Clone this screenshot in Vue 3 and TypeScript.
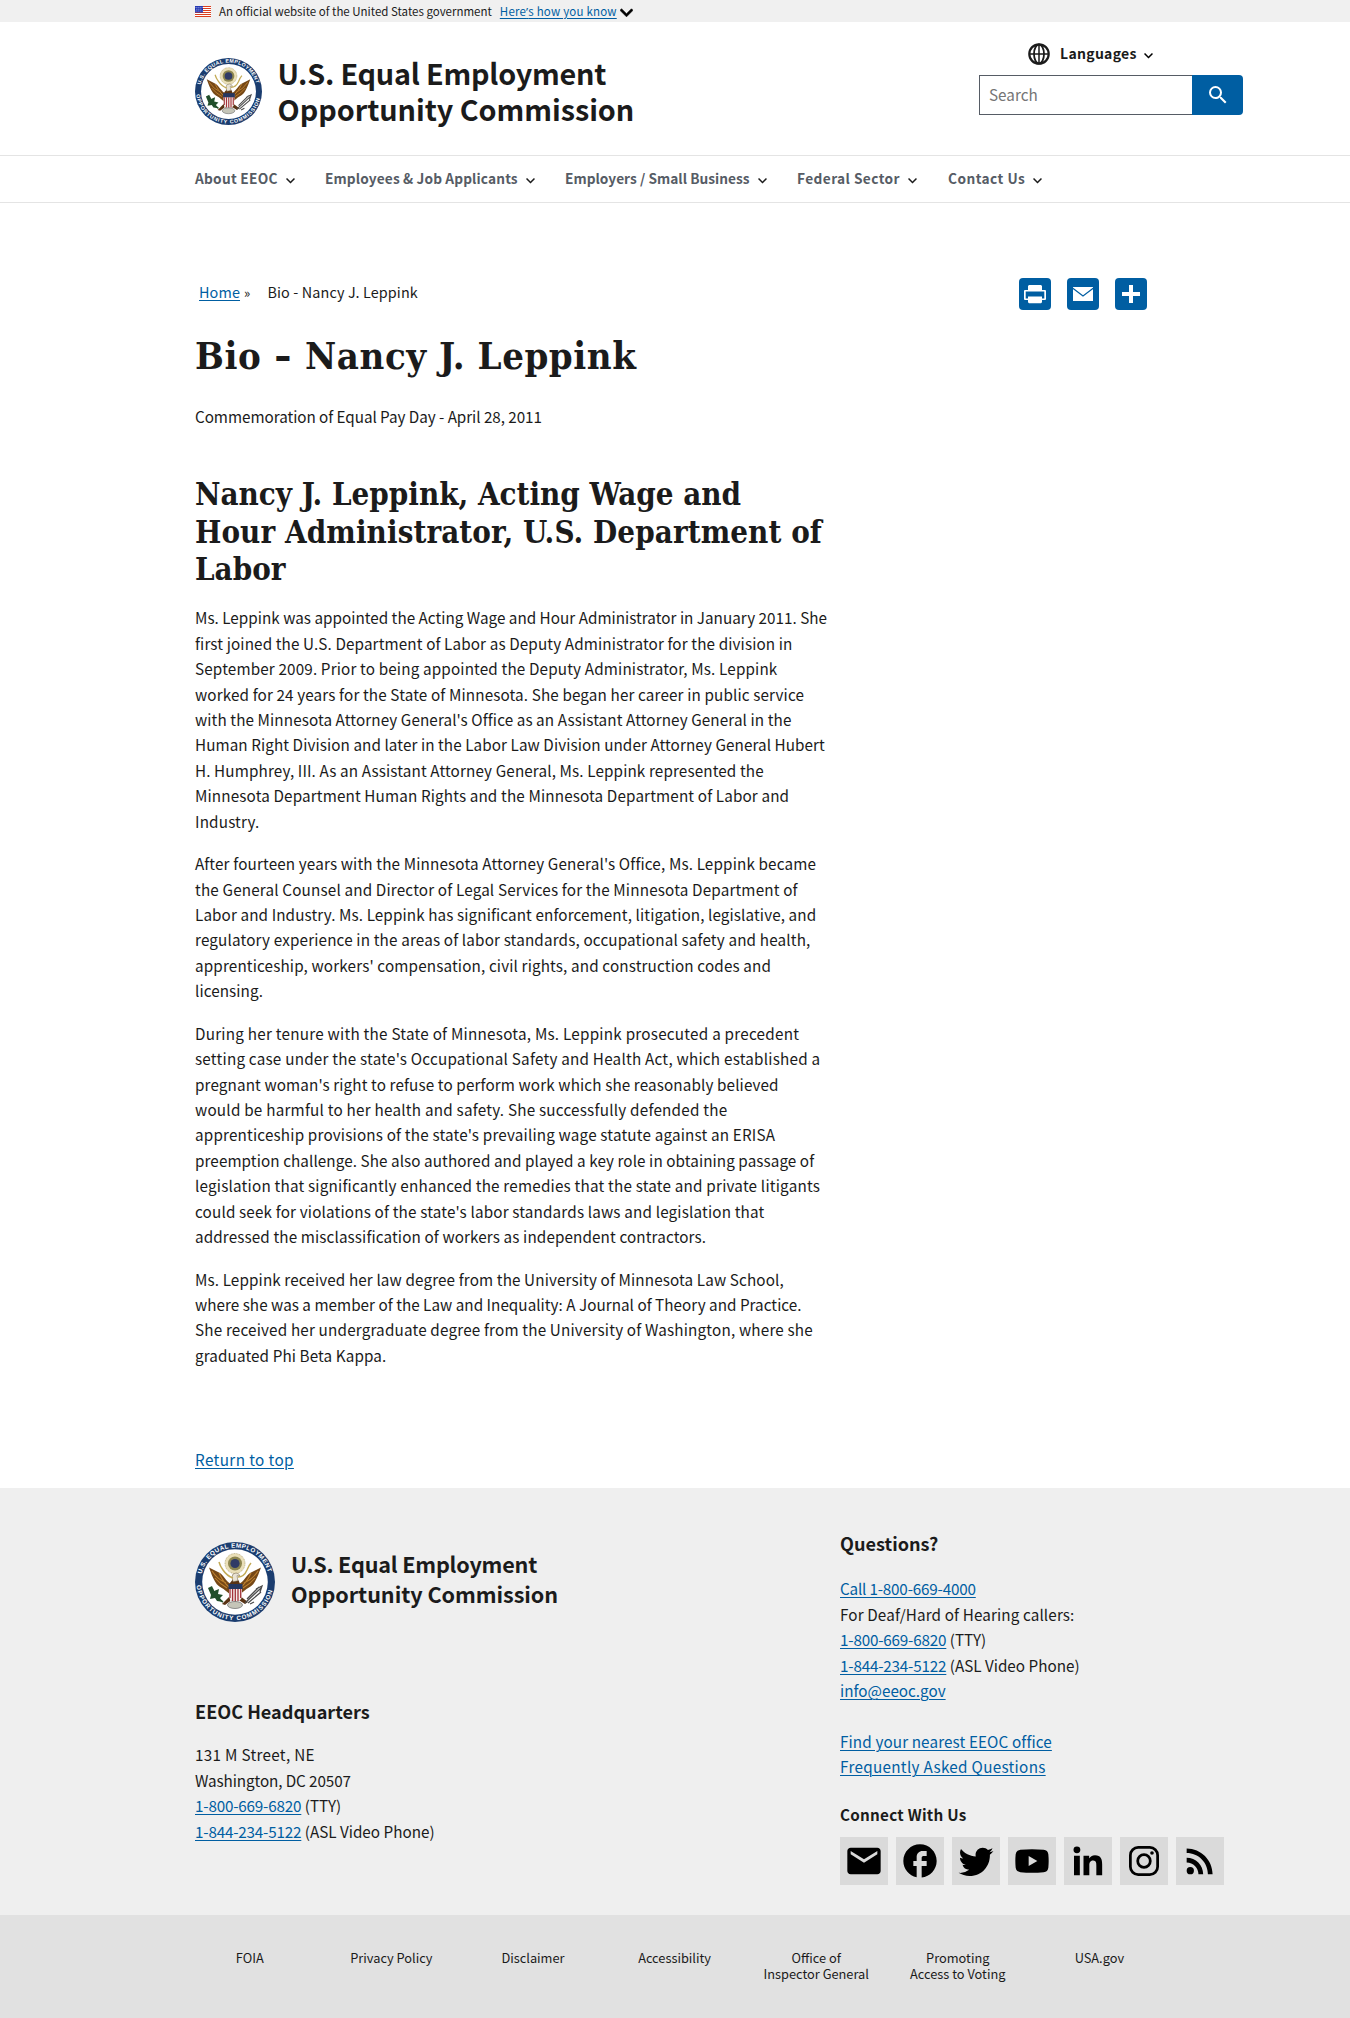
<script setup lang="ts">
interface NavItem { label: string; width: number; track: number }
/** A line of copy and the extra width, in pixels, spread over its letters. */
type Line = [text: string, extra: number]

const navItems: NavItem[] = [
  { label: 'About EEOC', width: 130, track: 0.26 },
  { label: 'Employees & Job Applicants', width: 240, track: 0.13 },
  { label: 'Employers / Small Business', width: 232, track: 0.03 },
  { label: 'Federal Sector', width: 151, track: 0.42 },
  { label: 'Contact Us', width: 110, track: 0.45 },
]

const paragraphs: Line[][] = [
  [
    ['Ms. Leppink was appointed the Acting Wage and Hour Administrator in January 2011. She', 1.3],
    ['first joined the U.S. Department of Labor as Deputy Administrator for the division in', 10],
    ['September 2009. Prior to being appointed the Deputy Administrator, Ms. Leppink', 11.5],
    ['worked for 24 years for the State of Minnesota. She began her career in public service', 11],
    ["with the Minnesota Attorney General's Office as an Assistant Attorney General in the", 8],
    ['Human Right Division and later in the Labor Law Division under Attorney General Hubert', 6.5],
    ['H. Humphrey, III. As an Assistant Attorney General, Ms. Leppink represented the', 9.5],
    ['Minnesota Department Human Rights and the Minnesota Department of Labor and', 10],
    ['Industry.', 1.5],
  ],
  [
    ["After fourteen years with the Minnesota Attorney General's Office, Ms. Leppink became", 12],
    ['the General Counsel and Director of Legal Services for the Minnesota Department of', 13],
    ['Labor and Industry. Ms. Leppink has significant enforcement, litigation, legislative, and', 9],
    ['regulatory experience in the areas of labor standards, occupational safety and health,', 13],
    ["apprenticeship, workers' compensation, civil rights, and construction codes and", 11],
    ['licensing.', 0.8],
  ],
  [
    ['During her tenure with the State of Minnesota, Ms. Leppink prosecuted a precedent', 19],
    ["setting case under the state's Occupational Safety and Health Act, which established a", 19],
    ["pregnant woman's right to refuse to perform work which she reasonably believed", 9],
    ['would be harmful to her health and safety. She successfully defended the', 16],
    ["apprenticeship provisions of the state's prevailing wage statute against an ERISA", 14],
    ['preemption challenge. She also authored and played a key role in obtaining passage of', 6.5],
    ['legislation that significantly enhanced the remedies that the state and private litigants', 17.5],
    ["could seek for violations of the state's labor standards laws and legislation that", 13],
    ['addressed the misclassification of workers as independent contractors.', 8],
  ],
  [
    ['Ms. Leppink received her law degree from the University of Minnesota Law School,', 9.5],
    ['where she was a member of the Law and Inequality: A Journal of Theory and Practice.', 2],
    ['She received her undergraduate degree from the University of Washington, where she', 14],
    ['graduated Phi Beta Kappa.', 2.6],
  ],
]

const track = (line: Line) => ({ letterSpacing: (line[1] / line[0].length).toFixed(3) + 'px' })

const social: { name: string; d: string }[] = [
  { name: 'Email', d: 'M20 4H4c-1.100 0-2 .9-2 2v12c0 1.100.9 2 2 2h16c1.100 0 2-.9 2-2V6c0-1.100-.9-2-2-2zm0 4-8 5-8-5V6l8 5 8-5v2z' },
  { name: 'Facebook', d: 'M22 12c0-5.520-4.480-10-10-10S2 6.480 2 12c0 4.840 3.440 8.870 8 9.800V15H8v-3h2V9.500C10 7.570 11.570 6 13.500 6H16v3h-2c-.55 0-1 .45-1 1v2h3v3h-3v6.950c5.050-.5 9-4.760 9-9.950z' },
  { name: 'Twitter', d: 'M22.460 6c-.77.35-1.600.58-2.460.69.88-.53 1.560-1.370 1.880-2.380-.83.5-1.750.85-2.720 1.050C18.370 4.500 17.260 4 16 4c-2.350 0-4.270 1.920-4.270 4.290 0 .34.04.67.11.98C8.280 9.090 5.110 7.380 3 4.790c-.37.63-.58 1.370-.58 2.150 0 1.490.75 2.810 1.910 3.560-.71 0-1.370-.2-1.950-.5v.03c0 2.080 1.480 3.820 3.440 4.210a4.220 4.220 0 0 1-1.930.07 4.280 4.280 0 0 0 4 2.980 8.521 8.521 0 0 1-5.330 1.840c-.34 0-.68-.02-1.020-.06C3.440 20.290 5.700 21 8.120 21 16 21 20.330 14.460 20.330 8.790c0-.19 0-.37-.01-.56.84-.6 1.560-1.360 2.140-2.230z' },
  { name: 'YouTube', d: 'M5 5.300Q12 4.700 19 5.300Q21.500 5.500 21.800 8Q22.200 12 21.800 16Q21.500 18.500 19 18.700Q12 19.300 5 18.700Q2.500 18.500 2.200 16Q1.800 12 2.200 8Q2.500 5.500 5 5.300zM10 9v6l5.200-3z' },
  { name: 'LinkedIn', d: 'M7.400 5.300a2.050 2.050 0 1 1-4.100 0a2.050 2.050 0 0 1 4.100 0zM7.100 8.900H3.600V20.500h3.500zM12.700 8.900H9.300V20.500h3.500v-5.800c0-1.600.4-3 2.300-3s1.900 1.700 1.900 3.100v5.700h3.500v-6.400c0-3.100-.7-5.500-4.300-5.500-1.700 0-2.900.9-3.400 1.800h-.1z' },
  { name: 'Instagram', d: 'M8.500 3h7A5.500 5.500 0 0 1 21 8.500v7a5.500 5.500 0 0 1-5.500 5.500h-7A5.500 5.500 0 0 1 3 15.500v-7A5.500 5.500 0 0 1 8.500 3zm0 1.650A3.850 3.850 0 0 0 4.650 8.500v7a3.850 3.850 0 0 0 3.850 3.850h7a3.850 3.850 0 0 0 3.850-3.850v-7a3.850 3.850 0 0 0-3.850-3.850zM12 7.400a4.600 4.600 0 1 1 0 9.200a4.600 4.600 0 0 1 0-9.200zm0 1.650a2.950 2.950 0 1 0 0 5.900a2.950 2.950 0 0 0 0-5.900zM16.800 6.100a1.100 1.100 0 1 1 0 2.200a1.100 1.100 0 0 1 0-2.200z' },
  { name: 'RSS', d: 'M6.180 15.640a2.180 2.180 0 1 1 0 4.360a2.180 2.180 0 0 1 0-4.360zM4 4.440v2.830c7.030 0 12.730 5.700 12.730 12.730h2.830c0-8.590-6.970-15.560-15.560-15.560zm0 5.660v2.830c3.900 0 7.070 3.170 7.070 7.070h2.830c0-5.470-4.430-9.900-9.900-9.900z' },
]

const footerLinks: string[][] = [
  ['FOIA'], ['Privacy Policy'], ['Disclaimer'], ['Accessibility'],
  ['Office of', 'Inspector General'], ['Promoting', 'Access to Voting'], ['USA.gov'],
]
const chevron = 'M16.590 8.590 12 13.170 7.410 8.590 6 10l6 6 6-6z'
</script>

<template>
  <svg class="defs" width="0" height="0" aria-hidden="true">
    <defs>
      <path id="arc-top" d="M6.600 32 A34.300 34.300 0 0 1 73.400 32" />
      <path id="arc-bottom" d="M1.600 43.500 A38.600 38.600 0 0 0 78.400 43.500" />
      <symbol id="seal" viewBox="0 0 80 80">
        <circle cx="40" cy="40" r="40" fill="#1b3d6f" />
        <circle cx="40" cy="40" r="32.800" fill="#fff" />
        <g fill="#fff" font-family="Liberation Sans, sans-serif" font-weight="700" font-size="6.200">
          <text letter-spacing=".45"><textPath href="#arc-top">U.S. EQUAL EMPLOYMENT</textPath></text>
          <text letter-spacing="1"><textPath href="#arc-bottom">OPPORTUNITY COMMISSION</textPath></text>
        </g>
        <circle cx="40" cy="21.500" r="10" fill="#eadfb8" stroke="#9b8a4d" stroke-width=".6" stroke-dasharray="1 .7" />
        <circle cx="40" cy="21.500" r="7" fill="#8d8650" />
        <circle cx="40" cy="21.500" r="4.600" fill="#303b66" />
        <path fill="#754716" d="M37 42C32 41 30 35 25 31L14 25.500c2 5 3.500 10 6 14 2 4 6 6 8.500 7.500L36 53zM43 42c5-1 7-7 12-11l11-5.500c-2 5-3.500 10-6 14-2 4-6 6-8.500 7.500L44 53z" />
        <path fill="none" stroke="#bd8130" stroke-width="1.100" d="M17 29q5 8 14 12M20 36q5 6 12 10M63 29q-5 8-14 12M60 36q-5 6-12 10M24 31q4 9 10 14M56 31q-4 9-10 14" />
        <path fill="#593314" d="M35 41q4-5 5-7l2 3q2 1 3 5v17H35zM35 54l-8 8 3 1 8-6zM45 54l8 6-3 2-8-5z" />
        <path fill="#e9e3d5" stroke="#6d5b39" stroke-width=".5" d="M37 35q0-4 4-4 3 0 4 3l-3-.3 1 5-5 1z" />
        <path fill="none" stroke="#c3aa55" stroke-width="1.500" d="M38 36q-6-2-10-8-3-4-4-8M43 35q6 0 9-7 2-5 4-7" />
        <path fill="#f4ece8" d="M34 44h13v11q-2 5-6.500 6Q36 60 34 55z" />
        <path fill="#253760" d="M33.500 42h14v5h-14z" />
        <path stroke="#a3333a" stroke-width="1.300" fill="none" d="M35 47v9M37.600 47v12M40.300 47v13M43 47v12M45.700 47v9" />
        <path fill="none" stroke="#315c32" stroke-width="1.800" d="M28 60q-8-4-11-14" />
        <path fill="#214e2a" d="M13 46l4-2 2 5 5-2-1 5 5 1-3 3 3 4-6-1-2-3-5 1 1-4z" />
        <path fill="none" stroke="#4c4c4c" stroke-width="1.300" d="M50 61l16-15M53 61l13-11M52 57l12-12M55 62l4-2M61 47l6-3-2 6" />
        <ellipse cx="40" cy="63" rx="7.500" ry="3.500" fill="#c5c5b8" stroke="#777" stroke-width=".8" />
      </symbol>
    </defs>
  </svg>

  <div class="page">
    <div class="banner">
      <div class="wrap banner-row">
        <svg class="flag" viewBox="0 0 16 11">
          <path fill="#fff" d="M0 0h16v11H0z" />
          <path stroke="#db3e1f" stroke-width="1" d="M0 .5h16M0 2.500h16M0 4.500h16M0 6.500h16M0 8.500h16M0 10.500h16" />
          <path fill="#1e33b1" d="M0 0h8v6.500H0z" />
          <path stroke="#fff" stroke-width=".8" stroke-dasharray=".8 1.200" d="M.7 1.400h7M1.500 3.200h6M.7 5h7" />
        </svg>
        <span class="official">An official website of the United States government</span>
        <a class="know">Here<span class="apos">’</span>s how you know</a>
        <svg class="know-chev" viewBox="6 7 12 10"><path :d="chevron" stroke="#000" stroke-width=".6" /></svg>
      </div>
    </div>

    <header class="wrap header">
      <svg class="logo"><use href="#seal" /></svg>
      <div class="title"><span class="tight">U.S. Equal Employment</span><br>Opportunity Commission</div>
      <div class="tools">
        <div class="lang">
          <svg class="globe" viewBox="0 0 22 22" fill="none" stroke="#1b1b1b" stroke-width="2.200">
            <circle cx="11" cy="11" r="9.700" /><ellipse cx="11" cy="11" rx="5" ry="9.500" stroke-width="1.800" />
            <path d="M1 11h20M11 1v20" stroke-width="1.500" />
          </svg>
          <span>Languages</span>
          <svg class="chev" viewBox="6 6 12 12"><path :d="chevron" /></svg>
        </div>
        <div class="search">
          <div class="field">Search</div>
          <div class="go">
            <svg viewBox="0 0 24 24" fill="#fff"><path d="M15.500 14h-.79l-.28-.27A6.471 6.471 0 0 0 16 9.500 6.500 6.500 0 1 0 9.500 16c1.610 0 3.090-.59 4.230-1.570l.27.28v.79l5 4.990L20.490 19l-4.990-5zm-6 0C7.010 14 5 11.990 5 9.500S7.010 5 9.500 5 14 7.010 14 9.500 11.990 14 9.500 14z" /></svg>
          </div>
        </div>
      </div>
    </header>

    <nav class="nav">
      <div class="wrap nav-row">
        <div v-for="n in navItems" :key="n.label" class="nav-item" :style="{ width: n.width + 'px', letterSpacing: n.track + 'px' }">
          <span>{{ n.label }}</span>
          <svg class="chev" viewBox="6 6 12 12"><path :d="chevron" /></svg>
        </div>
      </div>
    </nav>

    <main class="wrap">
      <div class="crumb-row">
        <div class="crumbs"><a>Home</a><span class="sep">»</span><span>Bio - Nancy J. Leppink</span></div>
        <div class="share">
          <svg viewBox="0 0 32 32"><rect width="32" height="32" rx="4" fill="#005ea2" /><path fill="#fff" fill-rule="evenodd" d="M10 7h12l1 1v4H9V8zM6 12h20q1 0 1 1v8q0 1-1 1h-3v2.300l-1 1H10l-1-1V22H6q-1 0-1-1v-8q0-1 1-1zm.7 1.600v6.800H9V18.500h14v1.900h2.300v-6.800z" /></svg>
          <svg viewBox="0 0 32 32"><rect width="32" height="32" rx="4" fill="#005ea2" /><path fill="#fff" d="M6 9h20v14H6z" /><path fill="none" stroke="#005ea2" stroke-width="1.200" d="M5.500 10 16 18l10.500-8" /></svg>
          <svg viewBox="0 0 32 32"><rect width="32" height="32" rx="4" fill="#005ea2" /><path fill="#fff" d="M14 7h4v7h7v4h-7v7h-4v-7H7v-4h7z" /></svg>
        </div>
      </div>
      <h1>Bio <span class="dash">-</span> Nancy J. Leppink</h1>
      <p class="lead">Commemoration of Equal Pay Day - April 28, 2011</p>
      <h2>Nancy J. Leppink, Acting Wage and<br><span class="wide">Hour Administrator, U.S. Department of</span><br>Labor</h2>
      <p v-for="(p, i) in paragraphs" :key="i" class="para">
        <template v-for="(line, j) in p" :key="j"><span :style="track(line)">{{ line[0] }}</span><br v-if="j < p.length - 1"></template>
      </p>
      <div class="return"><a>Return to top</a></div>
    </main>

    <footer>
      <div class="wrap foot">
        <div class="foot-left">
          <div class="foot-brand">
            <svg class="foot-logo"><use href="#seal" /></svg>
            <div class="foot-title"><span class="tight">U.S. Equal Employment</span><br>Opportunity Commission</div>
          </div>
          <h3 class="hq">EEOC Headquarters</h3>
          <div class="text"><span class="loose">131 M Street, NE</span><br><span class="snug">Washington, DC 20507</span><br><a class="num">1-800-669-6820</a> (TTY)<br><a class="num">1-844-234-5122</a> (ASL Video Phone)</div>
        </div>
        <div class="foot-right">
          <h3>Questions?</h3>
          <div class="text"><a class="num">Call 1-800-669-4000</a><br><span class="open">For Deaf/Hard of Hearing callers:</span><br><a class="num">1-800-669-6820</a> (TTY)<br><a class="num">1-844-234-5122</a> (ASL Video Phone)<br><a>info@eeoc.gov</a></div>
          <div class="text more"><a class="open">Find your nearest EEOC office</a><br><a class="loose">Frequently Asked Questions</a></div>
          <h4>Connect With Us</h4>
          <div class="social">
            <div v-for="s in social" :key="s.name" class="tile" :title="s.name">
              <svg viewBox="0 0 24 24"><path :d="s.d" fill-rule="evenodd" /></svg>
            </div>
          </div>
        </div>
      </div>
      <div class="legal">
        <div class="legal-row">
          <div v-for="(l, i) in footerLinks" :key="i" class="legal-item"><div v-for="t in l" :key="t">{{ t }}</div></div>
        </div>
      </div>
    </footer>
  </div>
</template>

<style>
body { margin: 0; background: #fff; }
</style>

<style scoped>
.page { width: 1350px; height: 2018px; overflow: hidden; color: #1b1b1b; font-family: "Noto Sans CJK SC", "Noto Sans", sans-serif; font-size: 15.260px; line-height: 25.440px; white-space: nowrap; }
.defs { position: absolute; }
svg { display: block; flex: none; }
h1, h2, h3, h4, p { margin: 0; }
a { color: #005ea2; text-decoration: underline; text-decoration-thickness: 1px; text-underline-offset: 2px; }
.wrap { margin-left: 195px; width: 1048px; }
.banner { height: 22px; background: #f0f0f0; }
.banner-row { display: flex; align-items: center; height: 22px; font-size: 11.500px; line-height: 22px; }
.flag { width: 16px; height: 11px; margin-right: 8px; }
.know { margin-left: 8px; letter-spacing: .2px; }
.apos { font-family: "Noto Sans", sans-serif; }
.know-chev { width: 13px; height: 11px; margin-left: 3px; margin-top: 2px; }
.header { height: 133px; display: flex; }
.logo { width: 67px; height: 67px; margin-top: 36px; }
.title { margin: 33px 0 0 15.500px; font-size: 28.800px; line-height: 36px; font-weight: 700; letter-spacing: -.04px; }
.title .tight { letter-spacing: -.22px; }
.tools { margin-left: auto; width: 264px; }
.lang { display: flex; align-items: center; margin: 20px 0 0 49px; height: 24px; font-size: 14px; font-weight: 700; }
.globe { width: 22px; height: 22px; margin-right: 10px; }
.lang span { width: 76px; letter-spacing: .3px; }
.chev { width: 9px; height: 9px; margin-left: 8px; margin-top: 3px; }
.search { display: flex; margin-top: 9px; height: 40px; }
.field { box-sizing: border-box; width: 213px; border: 1px solid #565c65; border-right: 0; padding-left: 9px; line-height: 37px; color: #757575; font-size: 15.260px; }
.go { width: 51px; background: #005ea2; border-radius: 0 4px 4px 0; display: flex; align-items: center; justify-content: center; }
.go svg { width: 24px; height: 24px; }
.nav { box-sizing: border-box; height: 48px; border-top: 1px solid #e4e4e4; border-bottom: 1px solid #e4e4e4; }
.nav-row { display: flex; height: 44px; }
.nav-item { display: flex; align-items: center; font-size: 13.700px; font-weight: 700; color: #565c65; line-height: 44px; }
.nav-item .chev { fill: #1b1b1b; margin-top: 4px; }
.crumb-row { display: flex; margin-top: 75px; height: 32px; }
.crumbs { padding-left: 4px; width: 820px; font-size: 14.400px; line-height: 27px; letter-spacing: .13px; }
.sep { margin: 0 17px 0 4px; font-size: 13px; }
.share { display: flex; gap: 16px; }
.share svg { width: 32px; height: 32px; }
h1 { font: 700 38px/48px "DejaVu Serif Condensed", "DejaVu Serif", serif; font-stretch: condensed; margin-top: 22px; letter-spacing: .52px; }
.dash { display: inline-block; width: 19px; transform: scaleX(1.250); transform-origin: 0 50%; }
.lead { margin-top: 24px; letter-spacing: -.05px; }
h2 { font: 700 31px/37.600px "DejaVu Serif Condensed", "DejaVu Serif", serif; font-stretch: condensed; margin-top: 46.500px; margin-bottom: 16.500px; }
.wide { letter-spacing: .08px; }
.para { margin-bottom: 16.960px; }
.return { margin-top: 79px; height: 41px; letter-spacing: .39px; }
footer { background: #efefef; }
.foot { height: 427px; display: flex; }
.foot-left { width: 645px; }
.foot-brand { display: flex; padding-top: 54px; height: 157px; }
.foot-logo { width: 80px; height: 80px; }
.foot-title { margin: 7px 0 0 16px; font-size: 21.600px; line-height: 30px; font-weight: 700; letter-spacing: -.05px; }
.foot-title .tight { letter-spacing: -.18px; }
h3 { font-size: 18.100px; line-height: 24px; font-weight: 700; margin-top: 43px; }
.hq { margin-top: 0; }
.foot-left .text { margin-top: 19px; }
.foot-right .text { margin-top: 21px; }
.foot-right .more { margin-top: 25.440px; }
.num { letter-spacing: -.19px; }
.snug { letter-spacing: -.1px; }
.open { letter-spacing: .12px; }
.loose { letter-spacing: .3px; }
h4 { font-size: 15.260px; line-height: 25px; font-weight: 700; margin-top: 22px; letter-spacing: .25px; }
.social { display: flex; gap: 8px; margin-top: 10px; }
.tile { width: 48px; height: 48px; background: #dadada; display: flex; align-items: center; justify-content: center; }
.tile svg { width: 40px; height: 40px; }
.legal { background: #e1e1e1; height: 103px; }
.legal-row { display: flex; padding: 35px 0 0 179px; }
.legal-item { width: 141.600px; text-align: center; font-size: 12.800px; line-height: 16px; }
</style>
